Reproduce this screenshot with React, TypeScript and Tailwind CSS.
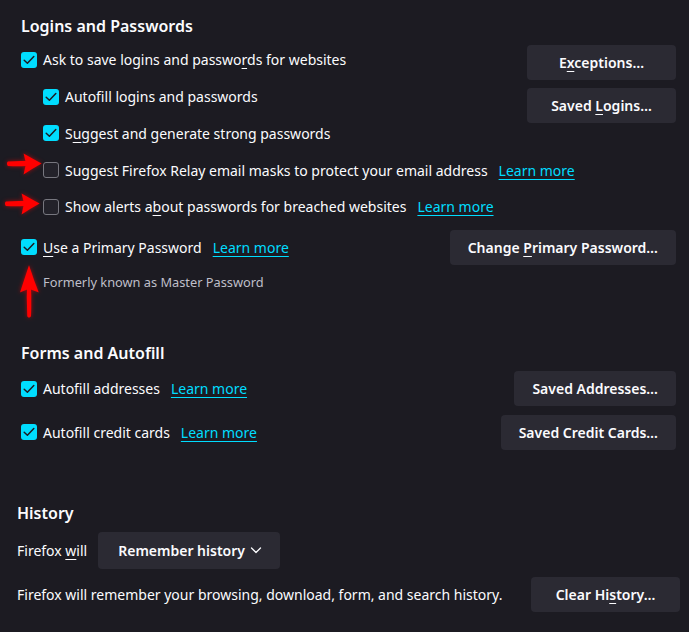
import type { ReactNode } from "react";

const FONT = { fontFamily: '"Noto Sans", "Open Sans", sans-serif' };

function Check({ on }: { on: boolean }) {
  if (!on) {
    return <span className="h-[16px] w-[16px] flex-none rounded-[3px] border border-[#77777f] bg-[#23222a]" />;
  }
  return (
    <span className="flex h-[16px] w-[16px] flex-none items-center justify-center rounded-[3px] bg-[#00ddff]">
      <svg viewBox="0 0 16 16" className="h-[16px] w-[16px]">
        <path d="M3.2 8.2 6.4 11.2 12.8 4.6" fill="none" stroke="#1c1b22" strokeWidth={1.5} strokeLinecap="round" strokeLinejoin="round" />
      </svg>
    </span>
  );
}

function Learn() {
  return <span className="ml-[11px] text-[#00ddff] underline decoration-1 underline-offset-[3px]">Learn more</span>;
}

function U({ children }: { children: ReactNode }) {
  return <span className="underline decoration-1 underline-offset-[3px]">{children}</span>;
}

function Row({ on, children, indent, h = "h-[36.7px]" }: { on: boolean; children: ReactNode; indent?: boolean; h?: string }) {
  return (
    <div className={`flex items-center ${h} ${indent ? "pl-[22px]" : ""}`}>
      <Check on={on} />
      <span className="ml-[6px] whitespace-nowrap">{children}</span>
    </div>
  );
}

function Btn({ children, cls = "" }: { children: ReactNode; cls?: string }) {
  return (
    <div className={`flex h-[35px] flex-none items-center justify-center rounded-[4px] bg-[#2b2a33] px-[18px] text-[14px] font-semibold whitespace-nowrap text-[#fbfbfe] ${cls}`}>
      <span>{children}</span>
    </div>
  );
}

function Arrow({ dir, className }: { dir: "right" | "up"; className: string }) {
  return (
    <svg
      viewBox="0 0 40 26"
      preserveAspectRatio="none"
      className={`pointer-events-none absolute ${className}`}
      style={{ filter: "drop-shadow(0 0 2px rgba(255,0,0,0.6))", transform: dir === "up" ? "rotate(-90deg)" : undefined }}
    >
      <path d="M2 11 Q14 10 21 10.5 L19 2.5 Q29 8 38.5 13 Q29 18 19 24.5 L21 15.5 Q14 16 2 15.5 Q0 13 2 11Z" fill="#ff0000" />
    </svg>
  );
}

export default function App() {
  return (
    <div className="relative h-[632px] w-[689px] overflow-hidden bg-[#1c1b22] text-[14px] text-[#fbfbfe]" style={FONT}>
      <div className="pl-[21px] pr-[13px]">
        <div className="mt-[14px] h-[24px] text-[16px] leading-[24px] font-semibold">Logins and Passwords</div>
        <div className="mt-[3.6px] flex justify-between">
          <div className="flex flex-col">
            <Row on>
              Ask to save logins and passwo<U>r</U>ds for websites
            </Row>
            <Row on indent>
              Autof<U>i</U>ll logins and passwords
            </Row>
            <Row on indent>
              S<U>u</U>ggest and generate strong passwords
            </Row>
          </div>
          <div className="mt-[3.4px] flex w-[149px] flex-none flex-col gap-[8px]">
            <Btn>
              E<U>x</U>ceptions…
            </Btn>
            <Btn>
              Saved <U>L</U>ogins…
            </Btn>
          </div>
        </div>
        <Row on={false} indent>
          Suggest Firefox Relay email masks to protect your email address
          <Learn />
        </Row>
        <Row on={false} indent>
          Show alerts a<U>b</U>out passwords for breached websites
          <Learn />
        </Row>
        <div className="flex h-[44px] items-center justify-between">
          <Row on h="h-[44px]">
            <U>U</U>se a Primary Password
            <Learn />
          </Row>
          <Btn>
            Change <U>P</U>rimary Password…
          </Btn>
        </div>
        <div className="h-[26px] pl-[22px] text-[12.8px] leading-[26px] text-[#bfbfc9]">Formerly known as Master Password</div>

        <div className="mt-[46px] h-[24px] text-[16px] leading-[24px] font-semibold">Forms and Autofill</div>
        <div className="flex h-[47px] items-center justify-between">
          <Row on h="h-[47px]">
            Autofill addresses
            <Learn />
          </Row>
          <Btn>Saved Addresses…</Btn>
        </div>
        <div className="flex h-[40px] items-center justify-between">
          <Row on h="h-[40px]">
            Autofill credit cards
            <Learn />
          </Row>
          <Btn>Saved Credit Cards…</Btn>
        </div>
      </div>

      <div className="pl-[17px] pr-[9px]">
        <div className="mt-[49px] h-[24px] text-[16px] leading-[24px] font-semibold">History</div>
        <div className="flex h-[50px] items-center">
          <span>
            Firefox <U>w</U>ill
          </span>
          <div className="ml-[11px] flex h-[37px] items-center rounded-[4px] bg-[#2b2a33] pr-[18px] pl-[20px] font-semibold">
            <span>Remember history</span>
            <svg viewBox="0 0 12 12" className="ml-[5px] h-[12px] w-[12px]">
              <path d="M1.5 4 6 8.5 10.5 4" fill="none" stroke="#fbfbfe" strokeWidth={1.3} strokeLinecap="round" strokeLinejoin="round" />
            </svg>
          </div>
        </div>
        <div className="flex h-[38px] items-center justify-between">
          <span className="whitespace-nowrap">Firefox will remember your browsing, download, form, and search history.</span>
          <Btn cls="w-[149px]">
            Clear Hi<U>s</U>tory…
          </Btn>
        </div>
      </div>

      <Arrow dir="right" className="left-[6px] top-[151px] h-[25px] w-[37px]" />
      <Arrow dir="right" className="left-[4px] top-[191px] h-[25px] w-[37px]" />
      <Arrow dir="up" className="left-[1px] top-[280px] h-[22px] w-[56px]" />
    </div>
  );
}
